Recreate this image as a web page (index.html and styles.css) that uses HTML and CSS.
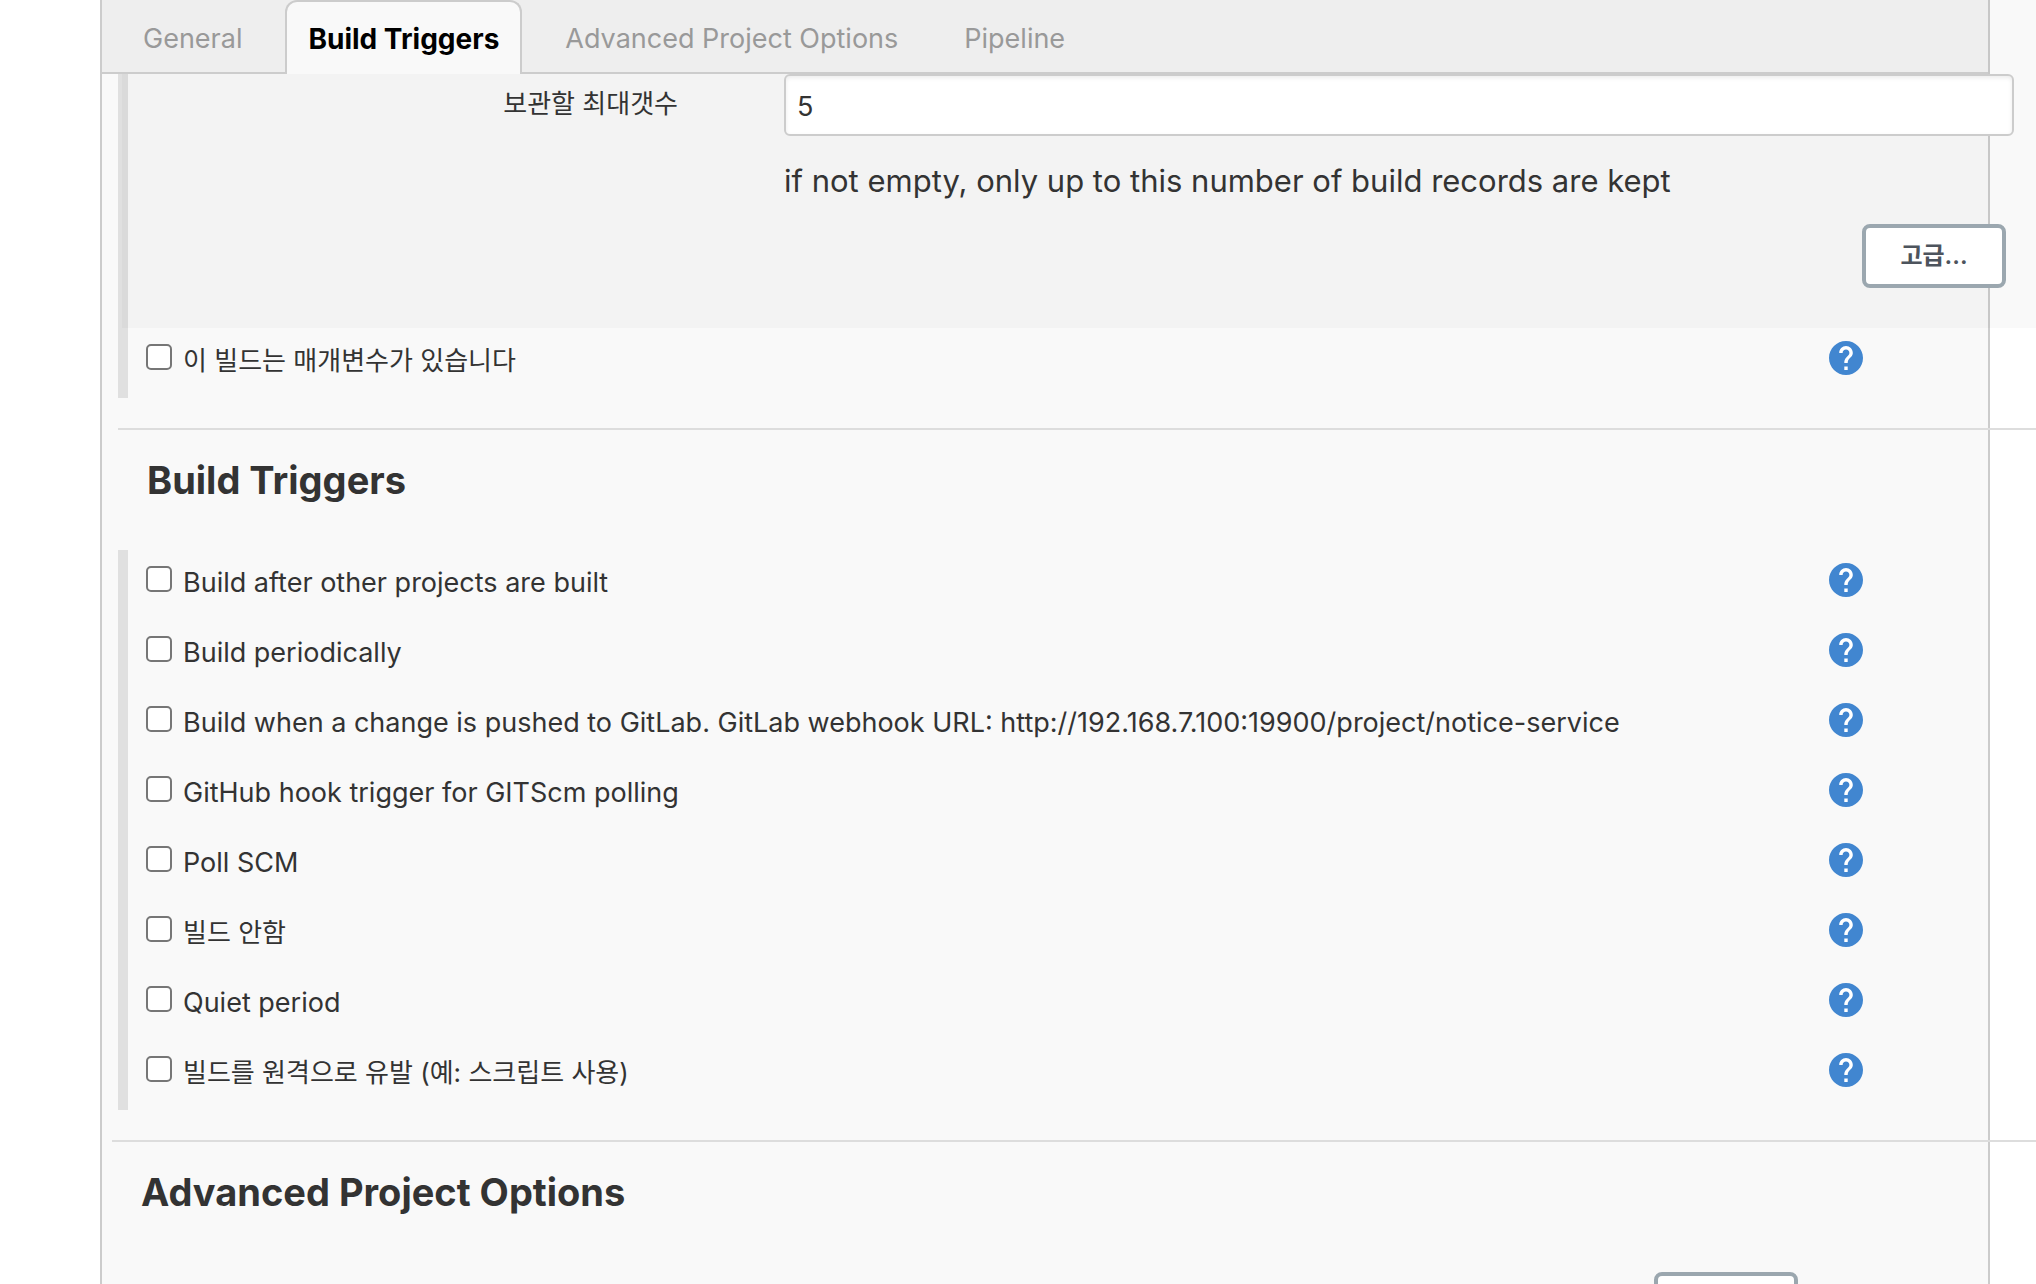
FILE: index.html
```html
<!DOCTYPE html>
<html lang="ko">
<head>
<meta charset="utf-8">
<title>Build Triggers</title>
<link rel="stylesheet" href="styles.css">
</head>
<body>
<svg class="sprite" aria-hidden="true">
  <symbol id="help" viewBox="2 2 20 20">
    <circle cx="12" cy="12" r="9" fill="#fff"/>
    <path fill="#4186d0" d="M12 2C6.48 2 2 6.48 2 12s4.480 10 10 10 10-4.480 10-10S17.520 2 12 2zm1 17h-2v-2h2v2zm2.070-7.750l-.9.920C13.450 12.900 13 13.500 13 15h-2v-.5c0-1.100.45-2.100 1.170-2.830l1.240-1.260c.37-.36.59-.86.59-1.410 0-1.100-.9-2-2-2s-2 .9-2 2H8c0-2.210 1.790-4 4-4s4 1.790 4 4c0 .88-.36 1.680-.93 2.250z"/>
  </symbol>
</svg>
<main class="page">
  <div class="panel">
    <div class="tabs" role="tablist">
      <button class="tab" role="tab">General</button>
      <button class="tab tab-active" role="tab" aria-selected="true">Build Triggers</button>
      <button class="tab" role="tab">Advanced Project Options</button>
      <button class="tab" role="tab">Pipeline</button>
    </div>
    <form class="config">
      <div class="options options-general">
        <div class="nested">
          <div class="field">
            <label class="field-label" for="max-builds">보관할 최대갯수</label>
            <div class="field-main">
              <input class="text-input" id="max-builds" type="text" value="5">
              <p class="hint">if not empty, only up to this number of build records are kept</p>
            </div>
          </div>
          <div class="actions"><button class="button" type="button">고급...</button></div>
        </div>
        <div class="option korean"><input type="checkbox" id="params"><label for="params">이 빌드는 매개변수가 있습니다</label><button class="help" type="button" aria-label="Help"><svg><use href="#help"/></svg></button></div>
      </div>
      <section class="section">
        <h2 class="heading">Build Triggers</h2>
        <div class="options">
          <div class="option"><input type="checkbox" id="t1"><label for="t1">Build after other projects are built</label><button class="help" type="button" aria-label="Help"><svg><use href="#help"/></svg></button></div>
          <div class="option"><input type="checkbox" id="t2"><label for="t2">Build periodically</label><button class="help" type="button" aria-label="Help"><svg><use href="#help"/></svg></button></div>
          <div class="option"><input type="checkbox" id="t3"><label for="t3">Build when a change is pushed to GitLab. GitLab webhook URL: http://192.168.7.100:19900/project/notice-service</label><button class="help" type="button" aria-label="Help"><svg><use href="#help"/></svg></button></div>
          <div class="option"><input type="checkbox" id="t4"><label for="t4">GitHub hook trigger for GITScm polling</label><button class="help" type="button" aria-label="Help"><svg><use href="#help"/></svg></button></div>
          <div class="option"><input type="checkbox" id="t5"><label for="t5">Poll SCM</label><button class="help" type="button" aria-label="Help"><svg><use href="#help"/></svg></button></div>
          <div class="option korean"><input type="checkbox" id="t6"><label for="t6">빌드 안함</label><button class="help" type="button" aria-label="Help"><svg><use href="#help"/></svg></button></div>
          <div class="option"><input type="checkbox" id="t7"><label for="t7">Quiet period</label><button class="help" type="button" aria-label="Help"><svg><use href="#help"/></svg></button></div>
          <div class="option korean"><input type="checkbox" id="t8"><label for="t8">빌드를 원격으로 유발 (예: 스크립트 사용)</label><button class="help" type="button" aria-label="Help"><svg><use href="#help"/></svg></button></div>
        </div>
      </section>
      <section class="section section-advanced">
        <h2 class="heading">Advanced Project Options</h2>
        <div class="actions"><button class="button" type="button" aria-label="고급"></button></div>
      </section>
    </form>
  </div>
</main>
</body>
</html>
```
FILE: styles.css
```css
* { box-sizing: border-box; }

body {
  margin: 0;
  background: #fff;
  color: #333;
  font-family: Inter, "Noto Sans CJK KR", sans-serif;
  font-size: 27px;
  line-height: 36px;
}

button, input { font: inherit; color: inherit; }

.sprite { display: none; }

.page {
  height: 100vh;
  overflow: hidden;
}

.panel {
  min-height: 100%;
  margin: 0 46px 0 100px;
  border: solid #ccc;
  border-width: 0 2px;
  background: #f9f9f9;
}

.tabs {
  position: relative;
  z-index: 1;
  display: flex;
  gap: 20px;
  height: 74px;
  padding-left: 18px;
  border-bottom: 2px solid #ccc;
  background: #eee;
}

.tab {
  height: 74px;
  padding: 2px 21px 0;
  border: 2px solid transparent;
  border-bottom: 0;
  border-radius: 12px 12px 0 0;
  background: none;
  color: #999;
  white-space: nowrap;
}

.tab-active {
  border-color: #ccc;
  background: #f9f9f9;
  color: #000;
  font-size: 28px;
  font-weight: 700;
}

/* The form is wider than its panel and runs on to the window's edge. */
.config {
  margin-right: -48px;
  padding-left: 16px;
}

.options { border-left: 10px solid #e0e0e0; }

.options-general {
  margin-top: -74px;
  margin-bottom: 30px;
}

.nested {
  margin-left: -6px;
  padding: 74px 22px 40px 0;
  background: rgba(0, 0, 0, .024);
}

.field {
  display: grid;
  grid-template-columns: 556px 1fr;
  column-gap: 106px;
}

.field-label {
  padding-top: 12px;
  font-size: 26px;
  text-align: right;
}

.text-input {
  display: block;
  width: 100%;
  height: 62px;
  padding: 2px 11px 0;
  border: 2px solid #ccc;
  border-radius: 6px;
  background: #fff;
  box-shadow: inset 0 2px 4px rgba(0, 0, 0, .08);
}

.hint {
  margin: 25px 0 23px;
  font-size: 31px;
  line-height: 40px;
}

.actions {
  display: flex;
  justify-content: flex-end;
  padding-right: 8px;
}

.button {
  width: 144px;
  height: 64px;
  padding: 0;
  border: 4px solid #9ba7af;
  border-radius: 8px;
  background: #fff;
  color: #4d545d;
  font-size: 24px;
  font-weight: 600;
}

.option {
  display: flex;
  align-items: flex-start;
  height: 70px;
  padding: 13px 173px 0 18px;
}

.option input {
  appearance: none;
  width: 26px;
  height: 26px;
  margin: 3px 11px 0 0;
  border: 2px solid #767676;
  border-radius: 5px;
  background: #fff;
}

.option label {
  flex: 1;
  padding-top: 2px;
}

.korean label { font-size: 26px; }

.help {
  width: 34px;
  height: 34px;
  padding: 0;
  border: 0;
  background: none;
}

.help svg {
  display: block;
  width: 34px;
  height: 34px;
}

.section {
  margin-bottom: 30px;
  border-top: 2px solid #ddd;
}

.heading {
  margin: 0;
  padding: 26px 0 46px 29px;
  font-size: 38px;
  font-weight: 700;
  line-height: 48px;
}

.section-advanced { margin-left: -6px; }

.section-advanced .actions {
  padding: 10px 238px 40px 0;
}
```
